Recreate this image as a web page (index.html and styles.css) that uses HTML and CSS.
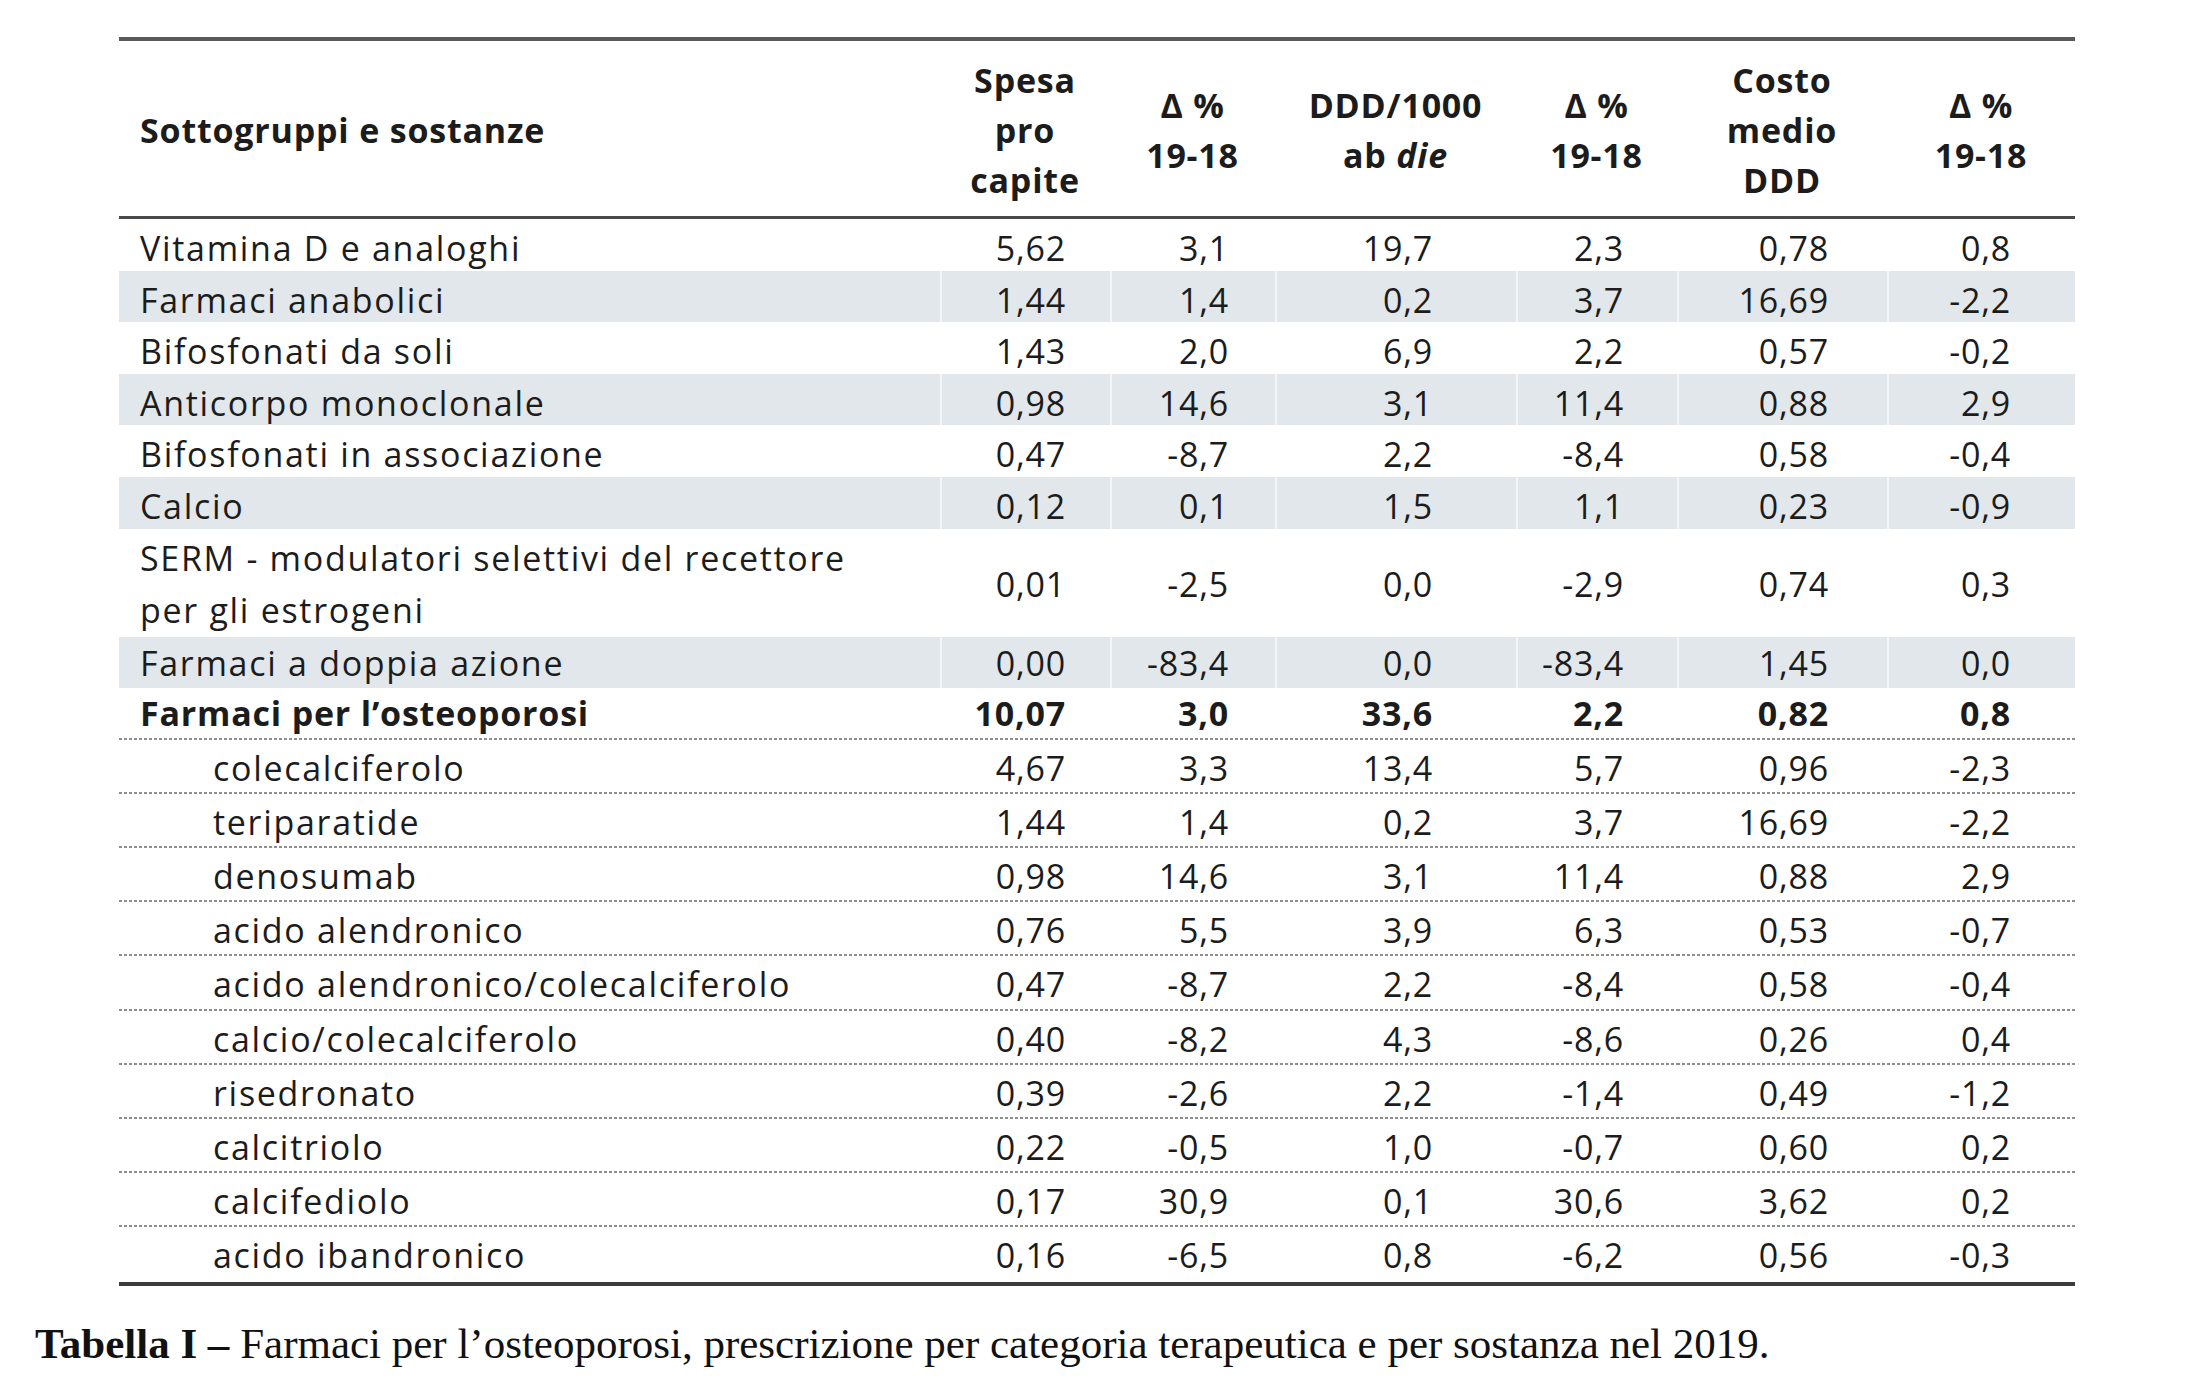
FILE: index.html
```html
<!DOCTYPE html>
<html lang="it">
<head>
<meta charset="utf-8">
<title>Tabella I</title>
<link rel="stylesheet" href="styles.css">
</head>
<body>
<figure class="figure">
  <div class="table-wrap">
    <table class="data">
      <colgroup>
        <col class="col-name"><col class="col-spesa"><col class="col-d1"><col class="col-ddd"><col class="col-d2"><col class="col-costo"><col class="col-d3">
      </colgroup>
      <thead>
        <tr>
          <th class="h-name">Sottogruppi e sostanze</th>
          <th>Spesa<br>pro<br>capite</th>
          <th>Δ %<br>19-18</th>
          <th>DDD/1000<br>ab <i>die</i></th>
          <th>Δ %<br>19-18</th>
          <th>Costo<br>medio<br>DDD</th>
          <th>Δ %<br>19-18</th>
        </tr>
      </thead>
      <tbody>
        <tr class="grp"><td>Vitamina D e analoghi</td><td>5,62</td><td>3,1</td><td>19,7</td><td>2,3</td><td>0,78</td><td>0,8</td></tr>
        <tr class="grp shade"><td>Farmaci anabolici</td><td>1,44</td><td>1,4</td><td>0,2</td><td>3,7</td><td>16,69</td><td>-2,2</td></tr>
        <tr class="grp"><td>Bifosfonati da soli</td><td>1,43</td><td>2,0</td><td>6,9</td><td>2,2</td><td>0,57</td><td>-0,2</td></tr>
        <tr class="grp shade"><td>Anticorpo monoclonale</td><td>0,98</td><td>14,6</td><td>3,1</td><td>11,4</td><td>0,88</td><td>2,9</td></tr>
        <tr class="grp"><td>Bifosfonati in associazione</td><td>0,47</td><td>-8,7</td><td>2,2</td><td>-8,4</td><td>0,58</td><td>-0,4</td></tr>
        <tr class="grp shade"><td>Calcio</td><td>0,12</td><td>0,1</td><td>1,5</td><td>1,1</td><td>0,23</td><td>-0,9</td></tr>
        <tr class="serm"><td>SERM - modulatori selettivi del recettore<br>per gli estrogeni</td><td>0,01</td><td>-2,5</td><td>0,0</td><td>-2,9</td><td>0,74</td><td>0,3</td></tr>
        <tr class="doppia shade"><td>Farmaci a doppia azione</td><td>0,00</td><td>-83,4</td><td>0,0</td><td>-83,4</td><td>1,45</td><td>0,0</td></tr>
        <tr class="total"><td>Farmaci per l’osteoporosi</td><td>10,07</td><td>3,0</td><td>33,6</td><td>2,2</td><td>0,82</td><td>0,8</td></tr>
        <tr class="sub"><td>colecalciferolo</td><td>4,67</td><td>3,3</td><td>13,4</td><td>5,7</td><td>0,96</td><td>-2,3</td></tr>
        <tr class="sub"><td>teriparatide</td><td>1,44</td><td>1,4</td><td>0,2</td><td>3,7</td><td>16,69</td><td>-2,2</td></tr>
        <tr class="sub"><td>denosumab</td><td>0,98</td><td>14,6</td><td>3,1</td><td>11,4</td><td>0,88</td><td>2,9</td></tr>
        <tr class="sub"><td>acido alendronico</td><td>0,76</td><td>5,5</td><td>3,9</td><td>6,3</td><td>0,53</td><td>-0,7</td></tr>
        <tr class="sub"><td>acido alendronico/colecalciferolo</td><td>0,47</td><td>-8,7</td><td>2,2</td><td>-8,4</td><td>0,58</td><td>-0,4</td></tr>
        <tr class="sub"><td>calcio/colecalciferolo</td><td>0,40</td><td>-8,2</td><td>4,3</td><td>-8,6</td><td>0,26</td><td>0,4</td></tr>
        <tr class="sub"><td>risedronato</td><td>0,39</td><td>-2,6</td><td>2,2</td><td>-1,4</td><td>0,49</td><td>-1,2</td></tr>
        <tr class="sub"><td>calcitriolo</td><td>0,22</td><td>-0,5</td><td>1,0</td><td>-0,7</td><td>0,60</td><td>0,2</td></tr>
        <tr class="sub"><td>calcifediolo</td><td>0,17</td><td>30,9</td><td>0,1</td><td>30,6</td><td>3,62</td><td>0,2</td></tr>
        <tr class="sub last"><td>acido ibandronico</td><td>0,16</td><td>-6,5</td><td>0,8</td><td>-6,2</td><td>0,56</td><td>-0,3</td></tr>
      </tbody>
    </table>
  </div>
  <figcaption class="caption"><b>Tabella I –</b> Farmaci per l’osteoporosi, prescrizione per categoria terapeutica e per sostanza nel 2019.</figcaption>
</figure>
</body>
</html>
```

FILE: styles.css
```css
html, body {
  margin: 0;
  padding: 0;
  background: #ffffff;
}

.figure {
  margin: 0;
  padding: 37px 0 0 35px;
}

.table-wrap {
  margin-left: 84px;
  width: 1956px;
}

.data {
  width: 1956px;
  table-layout: fixed;
  border-collapse: separate;
  border-spacing: 0;
  font-family: "Open Sans", Lato, "DejaVu Sans", sans-serif;
  font-size: 34px;
  letter-spacing: 0.8px;
  color: #1c1c1c;
}

.col-name { width: 821px; }
.col-spesa { width: 170px; }
.col-d1 { width: 165px; }
.col-ddd { width: 241px; }
.col-d2 { width: 161px; }
.col-costo { width: 210px; }
.col-d3 { width: 188px; }

.data th {
  font-weight: 700;
  text-align: center;
  vertical-align: middle;
  line-height: 50px;
  padding: 14px 0 11px;
  border-top: 4px solid #5a5a5a;
  border-bottom: 3px solid #4a4a4a;
}

.data th i {
  font-style: italic;
}

.data th.h-name {
  text-align: left;
  padding-left: 21px;
}

.data td {
  padding: 0;
  text-align: right;
  vertical-align: middle;
  white-space: nowrap;
}

.data td:first-child {
  text-align: left;
  padding-left: 21px;
  letter-spacing: 1.7px;
}

.data td:nth-child(2) { padding-right: 44px; }
.data td:nth-child(3) { padding-right: 46px; }
.data td:nth-child(4) { padding-right: 83px; }
.data td:nth-child(5) { padding-right: 53px; }
.data td:nth-child(6) { padding-right: 58px; }
.data td:nth-child(7) { padding-right: 64px; }

.grp td {
  line-height: 41.2px;
  padding-top: 9px;
  padding-bottom: 1.4px;
}

.serm td {
  line-height: 52px;
  padding-top: 3px;
  padding-bottom: 1px;
}

.doppia td {
  line-height: 41px;
  padding-top: 6px;
  padding-bottom: 4px;
}

.shade td {
  background: #e1e7ea;
}

.shade td + td {
  border-left: 2px solid #f3f6f7;
}

.total td {
  font-weight: 700;
  line-height: 41px;
  padding-top: 5px;
  padding-bottom: 6px;
}

.total td:first-child {
  letter-spacing: 0.8px;
}

.sub td {
  line-height: 42px;
  padding-top: 7px;
  padding-bottom: 5.2px;
}

.sub td:first-child {
  padding-left: 94px;
}

.total td,
.sub td {
  background-image: repeating-linear-gradient(90deg, #8e8e8e 0 3px, transparent 3px 5px);
  background-size: 100% 2px;
  background-position: left bottom;
  background-repeat: no-repeat;
}

.sub.last td {
  background-image: none;
  padding-top: 7px;
  padding-bottom: 6px;
  border-bottom: 4px solid #3c3c3c;
}

.caption {
  margin: 35px 0 0;
  font-family: "Liberation Serif", "DejaVu Serif", serif;
  font-size: 43px;
  line-height: 46px;
  color: #111111;
  white-space: nowrap;
}

.caption b {
  font-weight: 700;
}
```
